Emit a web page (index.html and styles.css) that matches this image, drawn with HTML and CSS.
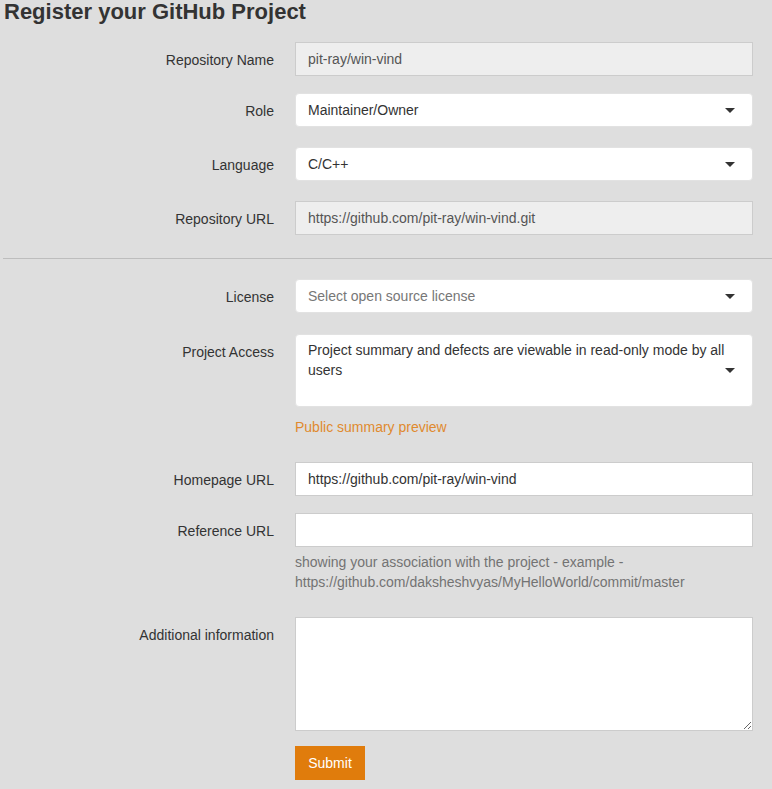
FILE: index.html
```html
<!DOCTYPE html>
<html>
<head>
<meta charset="utf-8">
<link rel="stylesheet" href="styles.css">
</head>
<body>
<h1 class="title">Register your GitHub Project</h1>
<form class="form">
  <div class="row r-first">
    <label class="lbl">Repository Name</label>
    <input class="field disabled" type="text" value="pit-ray/win-vind" disabled>
  </div>
  <div class="row r-17">
    <label class="lbl">Role</label>
    <div class="select"><span class="sel-text">Maintainer/Owner</span><span class="caret"></span></div>
  </div>
  <div class="row r-20">
    <label class="lbl">Language</label>
    <div class="select"><span class="sel-text">C/C++</span><span class="caret"></span></div>
  </div>
  <div class="row r-20">
    <label class="lbl">Repository URL</label>
    <input class="field disabled" type="text" value="https://github.com/pit-ray/win-vind.git" disabled>
  </div>
  <hr class="divider">
  <div class="row r-20">
    <label class="lbl">License</label>
    <div class="select"><span class="sel-text placeholder">Select open source license</span><span class="caret"></span></div>
  </div>
  <div class="row r-21">
    <label class="lbl">Project Access</label>
    <div class="field-col">
      <div class="select tall"><span class="sel-text multi">Project summary and defects are viewable in read-only mode by all users</span><span class="caret"></span></div>
      <a class="link">Public summary preview</a>
    </div>
  </div>
  <div class="row r-25">
    <label class="lbl">Homepage URL</label>
    <input class="field" type="text" value="https://github.com/pit-ray/win-vind">
  </div>
  <div class="row r-17">
    <label class="lbl">Reference URL</label>
    <div class="field-col">
      <input class="field" type="text" value="">
      <p class="help">showing your association with the project - example -<br>https://github.com/daksheshvyas/MyHelloWorld/commit/master</p>
    </div>
  </div>
  <div class="row r-25">
    <label class="lbl">Additional information</label>
    <div class="field-col">
      <textarea class="area"></textarea>
      <button class="submit" type="button">Submit</button>
    </div>
  </div>
</form>
</body>
</html>
```
FILE: styles.css
```css
html, body {
  margin: 0;
  padding: 0;
  background: #dedede;
  font-family: "Liberation Sans", Arial, sans-serif;
  font-size: 14px;
  color: #333;
}
.title {
  margin: 0;
  padding: 0 4px;
  font-size: 22px;
  line-height: 24px;
  font-weight: bold;
  color: #333;
}
.form {
  display: flex;
  flex-direction: column;
  margin-top: 18px;
}
.row {
  display: grid;
  grid-template-columns: 274px 458px;
  column-gap: 21px;
  align-items: start;
}
.r-first { margin-top: 0; }
.r-17 { margin-top: 17px; }
.r-20 { margin-top: 20px; }
.r-21 { margin-top: 21px; }
.r-25 { margin-top: 25px; }
.lbl {
  text-align: right;
  padding-top: 8px;
  line-height: 20px;
  color: #333;
}
.field {
  box-sizing: border-box;
  height: 34px;
  width: 458px;
  margin: 0;
  padding: 0 12px;
  border: 1px solid #ccc;
  background: #fff;
  font-family: inherit;
  font-size: 14px;
  color: #333;
  border-radius: 0;
  outline: none;
}
.field.disabled {
  background: #eee;
  color: #555;
  -webkit-text-fill-color: #555;
  opacity: 1;
}
.select {
  box-sizing: border-box;
  height: 34px;
  width: 458px;
  display: flex;
  align-items: center;
  justify-content: space-between;
  padding: 0 17px 0 12px;
  background: #fff;
  border: 1px solid #e2e2e2;
  border-radius: 4px;
  color: #333;
}
.sel-text { line-height: 20px; }
.placeholder { color: #777; }
.caret {
  width: 0;
  height: 0;
  border-left: 5px solid transparent;
  border-right: 5px solid transparent;
  border-top: 5px solid #333;
  flex: none;
}
.select.tall {
  height: 73px;
  align-items: center;
}
.multi {
  align-self: flex-start;
  padding-top: 5px;
  padding-right: 0;
}
.field-col {
  display: flex;
  flex-direction: column;
  align-items: flex-start;
}
.link {
  margin-top: 10px;
  line-height: 20px;
  color: #e08a2e;
  text-decoration: none;
}
.help {
  margin: 5px 0 0;
  line-height: 20px;
  color: #737373;
}
.area {
  box-sizing: border-box;
  width: 458px;
  height: 114px;
  margin: 0;
  border: 1px solid #ccc;
  background: #fff;
  font-family: inherit;
  font-size: 14px;
  border-radius: 0;
  outline: none;
  display: block;
}
.submit {
  margin-top: 15px;
  width: 70px;
  height: 34px;
  border: none;
  border-radius: 0;
  background: #e07c0c;
  color: #fff;
  font-family: inherit;
  font-size: 14px;
  padding: 0;
}
.divider {
  margin: 23px 0 0 3px;
  border: none;
  border-top: 1px solid #bdbdbd;
  height: 0;
}
```
